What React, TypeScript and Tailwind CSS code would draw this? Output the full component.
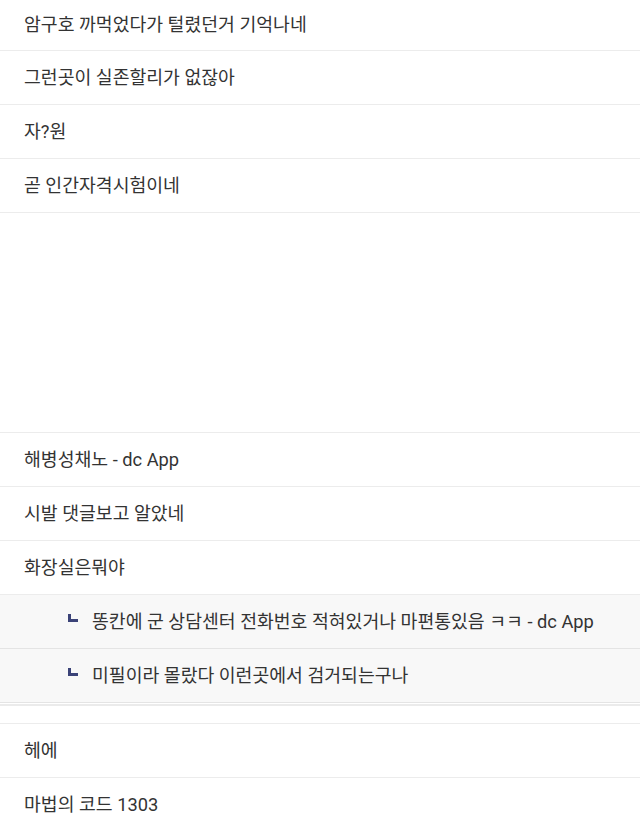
import React from "react";

const topRows = [
  "암구호 까먹었다가 털렸던거 기억나네",
  "그런곳이 실존할리가 없잖아",
  "자?원",
  "곧 인간자격시험이네",
];

const midRows = ["해병성채노 - dc App", "시발 댓글보고 알았네", "화장실은뭐야"];

const replies = [
  "똥칸에 군 상담센터 전화번호 적혀있거나 마편통있음 ㅋㅋ - dc App",
  "미필이라 몰랐다 이런곳에서 검거되는구나",
];

const bottomRows = ["헤에", "마법의 코드 1303"];

function Row({ text, first = false }: { text: string; first?: boolean }) {
  return (
    <div
      className={`${first ? "h-[51px]" : "h-[54px]"} flex items-center px-6 border-b border-[#ececec] bg-white`}
    >
      <span className="text-[18.3px] text-[#333333]">{text}</span>
    </div>
  );
}

function ReplyRow({ text }: { text: string }) {
  return (
    <div className="h-[54px] flex items-center pl-[68px] border-b border-[#e4e4e4] bg-[#f8f8f8]">
      <div className="w-[10px] h-[8px] border-l-[3px] border-b-[3px] border-[#3b4378] mr-[14px] mb-[7px]" />
      <span className="text-[18.3px] text-[#333333]">{text}</span>
    </div>
  );
}

export default function App() {
  return (
    <div
      className="w-[640px] h-[830px] overflow-hidden bg-white"
      style={{ fontFamily: "Roboto, 'Noto Sans CJK KR', sans-serif" }}
    >
      {topRows.map((t, i) => (
        <Row key={t} text={t} first={i === 0} />
      ))}
      {/* empty ad slot */}
      <div className="h-[220px] border-b border-[#ececec]" />
      {midRows.map((t) => (
        <Row key={t} text={t} />
      ))}
      {replies.map((t) => (
        <ReplyRow key={t} text={t} />
      ))}
      <div className="h-[1px] bg-white" />
      <div className="h-[2px] bg-[#ebebeb]" />
      <div className="h-[18px] border-b border-[#ececec]" />
      {bottomRows.map((t) => (
        <Row key={t} text={t} />
      ))}
    </div>
  );
}
